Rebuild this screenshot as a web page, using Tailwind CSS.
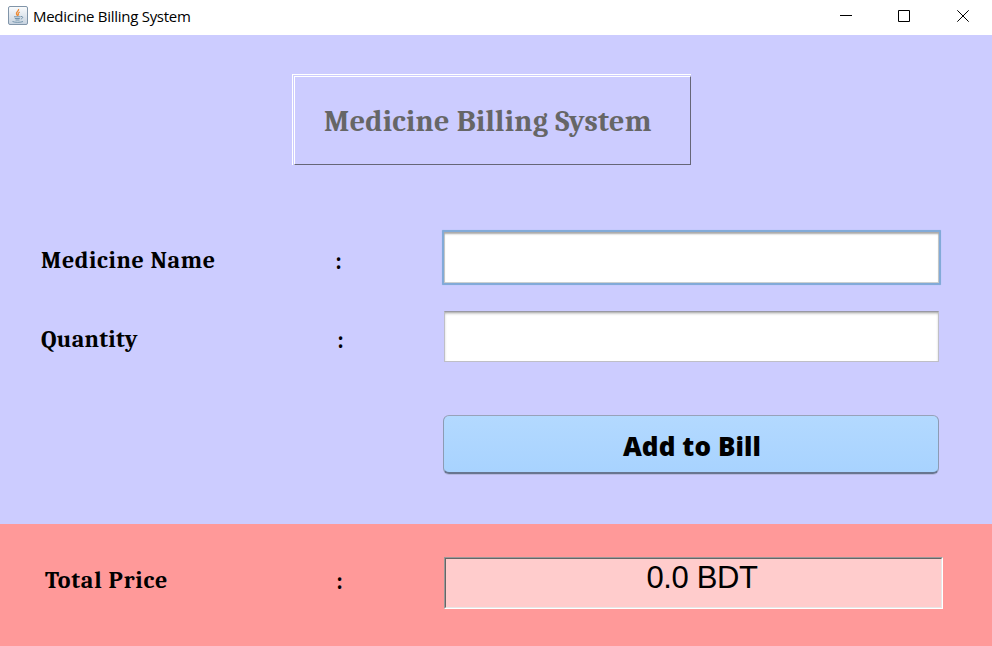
<!DOCTYPE html>
<html lang="en">
<head>
<meta charset="utf-8">
<title>Medicine Billing System</title>
<script src="https://cdn.jsdelivr.net/npm/@tailwindcss/browser@4"></script>
</head>
<body class="w-[992px] h-[646px] overflow-hidden flex flex-col bg-[#ccccff] text-black font-['Cambria','Caladea','Liberation_Serif',serif]">
<header class="h-[35px] shrink-0 bg-white flex items-start justify-between">
  <div class="flex pl-2 pt-1.5">
    <svg class="w-5 h-5 shrink-0" viewBox="0 0 20 20" fill="none">
      <defs><linearGradient id="tile" x2="0" y2="1"><stop stop-color="#fbfcfd"/><stop offset="1" stop-color="#c6d2df"/></linearGradient></defs>
      <rect x=".5" y=".5" width="19" height="18" rx="1.5" fill="url(#tile)" stroke="#8195a9"/>
      <path d="M10.500 3c1 2-3 3-2 5 .3.8 1 1.300 1 2M11.800 6c-2 1-2 2-1 3.500" stroke="#ed8a35" stroke-width="1.300"/>
      <path d="M6 10.800h6.500M6.800 12.500h5M7.500 14h4M12.800 10.500c2.800-.5 2.300 2 0 2.500M4.500 15.500c2 1.100 8.500 1.100 10.500 0" stroke="#7595ac" stroke-width="1"/>
    </svg>
    <span class="ml-[5px] text-[15px] leading-5 tracking-[-0.28px] whitespace-nowrap font-['Segoe_UI','Open_Sans',sans-serif]">Medicine Billing System</span>
  </div>
  <svg class="w-[172px] h-[35px]" viewBox="0 0 172 35" fill="none" stroke="#000" stroke-width="1">
    <path d="M20 15.500h12M78.500 10.500h11v11h-11zM137.300 10.300l11.400 11.400M148.700 10.300l-11.400 11.400"/>
  </svg>
</header>
<main class="h-[489px] shrink-0 pt-[39px]">
  <div class="ml-[292px] w-[399px] h-[91px] border-l border-t border-white pl-px pt-px">
    <h1 class="w-[397px] h-[89px] border border-l-white border-t-white border-r-[#666677] border-b-[#666677] pl-[29px] pt-[27px] text-[30px] leading-9 font-bold text-[#666666] whitespace-nowrap tracking-[0.3px]">Medicine Billing System</h1>
  </div>
  <div class="flex mt-[65px] h-[55px] text-2xl leading-8 font-bold">
    <label class="w-[294px] ml-[41px] mt-[14px] whitespace-nowrap tracking-[0.61px]">Medicine Name</label>
    <span class="w-[107px] mt-[15px]">:</span>
    <div class="w-[499px] h-[55px] rounded-[1px] border-2 border-[#82aad8] bg-white shadow-[inset_0_2px_2px_#aaaaaa,inset_0_0_0_1px_#ccd0d0,0_0_1px_#8fb4e4]"></div>
  </div>
  <div class="flex mt-[26px] h-[51px] text-2xl leading-8 font-bold">
    <label class="w-[296px] ml-[41px] mt-3 whitespace-nowrap tracking-[0.25px]">Quantity</label>
    <span class="w-[107px] mt-[13px]">:</span>
    <div class="w-[495px] h-[51px] border border-[#bfbfc6] border-t-[#9999a3] bg-white shadow-[inset_0_2px_3px_-1px_#999999]"></div>
  </div>
  <button class="block ml-[443px] mt-[53px] w-[496px] h-[59px] rounded-[6px] border-2 border-t-[#98a2b9] border-x-[#8d9bb4] border-b-[#687690] border-t border-x bg-linear-to-b from-[#b3d9ff] to-[#a8d3ff] shadow-[0_1px_0_#b6b8df] font-['Open_Sans',sans-serif] font-extrabold text-[26px] leading-[56px] pt-[2px] pl-[2px] tracking-[0.1px] whitespace-nowrap">Add to Bill</button>
</main>
<footer class="h-[122px] bg-[#ff9999] pt-[33px] flex text-2xl leading-8 font-bold">
  <span class="w-[291px] ml-[45px] mt-[7px] whitespace-nowrap tracking-[0.8px]">Total Price</span>
  <span class="w-[108px] mt-2">:</span>
  <div class="w-[499px] h-[52px] border border-t-[#999999] border-l-[#999999] border-r-white border-b-white">
    <div class="h-full border border-t-[#666666] border-l-[#666666] border-r-[#e6e6e6] border-b-[#e6e6e6] bg-[#ffcccc] pl-[17px] text-center text-[31px] leading-[38px] font-normal tracking-[-0.4px] font-['Liberation_Sans',sans-serif] whitespace-nowrap">0.0 BDT</div>
  </div>
</footer>
</body>
</html>
